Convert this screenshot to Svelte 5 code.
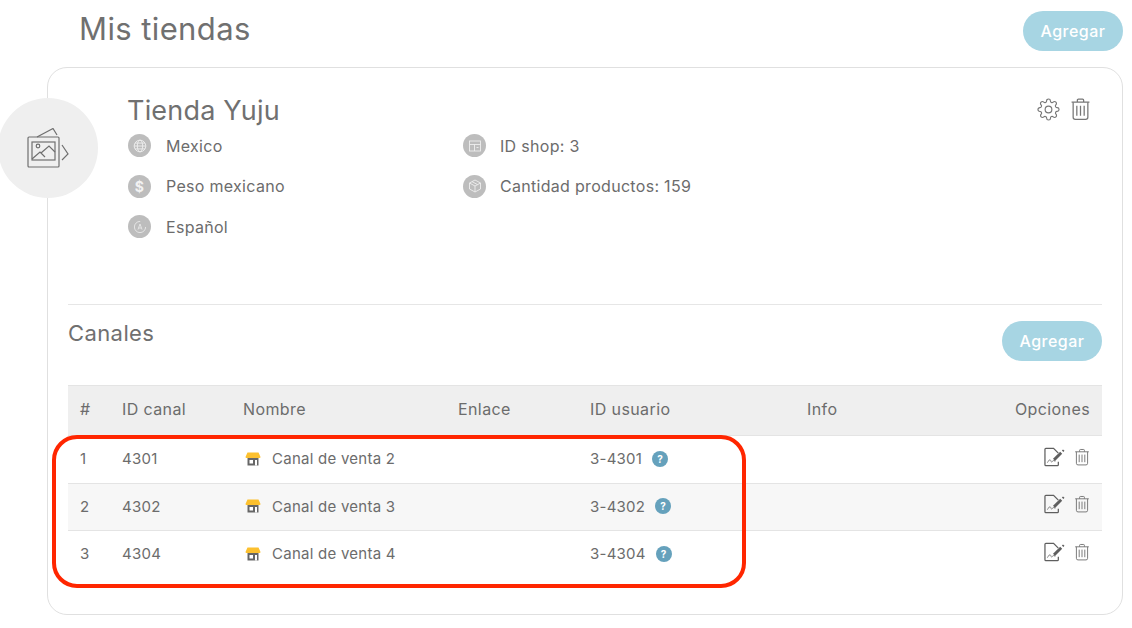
<script>
  const rows = [
    { n: 1, id: '4301', name: 'Canal de venta 2', user: '3-4301' },
    { n: 2, id: '4302', name: 'Canal de venta 3', user: '3-4302' },
    { n: 3, id: '4304', name: 'Canal de venta 4', user: '3-4304' }
  ];
</script>

{#snippet trash(cls)}
  <svg class={cls} viewBox="0 0 20 22" fill="none" stroke="#777" stroke-width="1.2">
    <path d="M1.5 4.5h17M7 4.5V2.6q0-1 1-1h4q1 0 1 1v1.9" />
    <path d="M3 4.5v14.4q0 2 2 2h10q2 0 2-2V4.5" />
    <path d="M6.5 8v9.5M10 8v9.5M13.5 8v9.5" />
  </svg>
{/snippet}

<div class="page">
  <header class="top">
    <h1>Mis tiendas</h1>
    <button class="add">Agregar</button>
  </header>

  <section class="card">
    <div class="avatar">
      <svg viewBox="0 0 44 40" width="44" height="40" fill="none" stroke="#6f6f6f" stroke-width="1.2">
        <rect x="1" y="9" width="31" height="30" rx="1" />
        <rect x="5" y="14" width="23" height="18" />
        <circle cx="11" cy="18" r="1.800" />
        <path d="M5 31l8-7 5 5M14 25l8-7 6 6" />
        <path d="M10 9l16-8.500 4 6.500M35 17l6 9-6 6" />
      </svg>
    </div>

    <div class="shop">
      <div class="actions">
        <svg class="gear" viewBox="0 0 24 24" fill="none" stroke="#777" stroke-width="1.200">
          <circle cx="12" cy="12" r="3.500" />
          <path d="M19.4 15a1.65 1.65 0 0 0 .33 1.82l.06.06a2 2 0 0 1 0 2.83 2 2 0 0 1-2.83 0l-.06-.06a1.65 1.65 0 0 0-1.82-.33 1.65 1.65 0 0 0-1 1.51V21a2 2 0 0 1-2 2 2 2 0 0 1-2-2v-.09A1.65 1.65 0 0 0 9 19.4a1.65 1.65 0 0 0-1.82.33l-.06.06a2 2 0 0 1-2.83 0 2 2 0 0 1 0-2.83l.06-.06a1.65 1.65 0 0 0 .33-1.82 1.65 1.65 0 0 0-1.51-1H3a2 2 0 0 1-2-2 2 2 0 0 1 2-2h.09A1.65 1.65 0 0 0 4.6 9a1.65 1.65 0 0 0-.33-1.82l-.06-.06a2 2 0 0 1 0-2.83 2 2 0 0 1 2.83 0l.06.06a1.65 1.65 0 0 0 1.82.33H9a1.65 1.65 0 0 0 1-1.51V3a2 2 0 0 1 2-2 2 2 0 0 1 2 2v.09a1.65 1.65 0 0 0 1 1.51 1.65 1.65 0 0 0 1.82-.33l.06-.06a2 2 0 0 1 2.83 0 2 2 0 0 1 0 2.83l-.06.06a1.65 1.65 0 0 0-.33 1.82V9a1.65 1.65 0 0 0 1.51 1H21a2 2 0 0 1 2 2 2 2 0 0 1-2 2h-.09a1.65 1.65 0 0 0-1.51 1z" />
        </svg>
        {@render trash('bin')}
      </div>
      <h2>Tienda Yuju</h2>
      <div class="facts">
        <ul class="col-a">
          <li>
            <span class="dot"><svg viewBox="0 0 12 12" fill="none" stroke="#eee" stroke-width=".8"><circle cx="6" cy="6" r="5" /><ellipse cx="6" cy="6" rx="2.3" ry="5" /><path d="M1 6h10M1.700 3.500h8.600M1.700 8.500h8.600" /></svg></span>
            Mexico
          </li>
          <li><span class="dot dollar">$</span> Peso mexicano</li>
          <li>
            <span class="dot"><svg viewBox="0 0 14 14" fill="none" stroke="#eee" stroke-width=".8"><circle cx="7" cy="7" r="5.600" stroke-dasharray="26 9" /><path d="M5 9.500L7 4l2 5.500M5.700 8h2.600" /></svg></span>
            Español
          </li>
        </ul>
        <ul class="col-b">
          <li>
            <span class="dot"><svg viewBox="0 0 14 14" fill="none" stroke="#eee" stroke-width=".9"><rect x="1.500" y="2" width="11" height="10" /><path d="M1.500 5.500h11M6.500 5.500V12M8.500 8.500h2" /></svg></span>
            ID shop: 3
          </li>
          <li>
            <span class="dot"><svg viewBox="0 0 14 14" fill="none" stroke="#eee" stroke-width=".9"><path d="M7 1l5.500 3v6L7 13l-5.500-3V4zM1.500 4L7 7l5.500-3M7 7v6M4 2.600l5.500 3" /></svg></span>
            Cantidad productos: 159
          </li>
        </ul>
      </div>
    </div>

    <div class="channels">
      <div class="channels-head">
        <h3>Canales</h3>
        <button class="add">Agregar</button>
      </div>

      <div class="table">
        <div class="row head">
          <span>#</span><span>ID canal</span><span>Nombre</span><span>Enlace</span><span>ID usuario</span><span>Info</span><span class="right">Opciones</span>
        </div>
        {#each rows as r}
          <div class="row">
            <span>{r.n}</span>
            <span>{r.id}</span>
            <span class="name">
              <svg class="store" viewBox="0 0 16 14">
                <path d="M2.500 6h11v7.500h-11z" fill="#666" />
                <path d="M4.500 8h3.500v3.500H4.500z M10 8h2v5.500h-2z" fill="#fff" />
                <path d="M2.500 0.500h11l2 4.500q0 1-1 1H1.500q-1 0-1-1z" fill="#fcc02e" />
              </svg>
              {r.name}
            </span>
            <span></span>
            <span class="user">{r.user}<i class="help">?</i></span>
            <span></span>
            <span class="opts">
              <svg class="sign" viewBox="0 0 22 20" fill="none" stroke="#5f5f5f" stroke-width="1.300">
                <path d="M15 15v3q0 1-1 1H2q-1 0-1-1V2q0-1 1-1h8l5 5" />
                <path d="M3.500 16q2-4 3-3t1 2 2-1 2 1" stroke="#888" stroke-width="1" />
                <path d="M10.500 13l7.500-7.500" stroke-width="3" />
                <path d="M19.500 4l1.200-1.200" stroke-width="2.200" />
              </svg>
              {@render trash('bin small')}
            </span>
          </div>
        {/each}
      </div>
    </div>

    <div class="mark"></div>
  </section>
</div>

<style>
  :global(body) {
    margin: 0;
    background: #fff;
    overflow: hidden;
  }
  :global(#app) { padding-top: .1px; }
  .page {
    width: 1076px;
    margin-left: 47px;
    font-family: Inter, "Liberation Sans", sans-serif;
    color: #6c6c6c;
    font-size: 16px;
    letter-spacing: .3px;
  }
  h1, h2, h3, ul { margin: 0; padding: 0; font-weight: 400; }
  ul { list-style: none; }
  .top {
    display: flex;
    justify-content: space-between;
    align-items: flex-start;
    height: 40px;
    margin-top: 11px;
    margin-bottom: 16px;
    padding-left: 32px;
  }
  h1 { font-size: 31px; line-height: 36px; letter-spacing: .4px; color: #707070; }
  .add {
    width: 100px;
    height: 40px;
    border: 0;
    border-radius: 20px;
    background: #a7d5e3;
    color: #fff;
    font: 500 16px Inter, sans-serif;
    letter-spacing: .5px;
    padding: 0;
  }
  .card {
    position: relative;
    box-sizing: border-box;
    height: 548px;
    border: 1px solid #e0e0e0;
    border-radius: 20px;
    padding: 0 20px;
  }
  .avatar {
    position: absolute;
    left: -50px;
    top: 30px;
    width: 100px;
    height: 100px;
    padding-left: 2px;
    box-sizing: border-box;
    border-radius: 50%;
    background: #efefef;
    display: flex;
    align-items: center;
    justify-content: center;
  }
  .shop {
    position: relative;
    box-sizing: border-box;
    height: 237px;
    padding: 29px 0 0 60px;
    border-bottom: 1px solid #e6e6e6;
  }
  .actions {
    position: absolute;
    right: 11px;
    top: 29px;
    display: flex;
    gap: 10px;
    align-items: center;
  }
  .gear { width: 23px; height: 23px; margin-left: -1px; }
  .bin { width: 21px; height: 24px; }
  .bin.small { width: 16px; height: 20px; }
  h2 {
    font-size: 27px;
    line-height: 28.300px;
    letter-spacing: .2px;
    color: #707070;
    margin-left: -1px;
  }
  .facts { display: flex; }
  .col-a { width: 335px; }
  .col-b li { gap: 14px; }
  li {
    display: flex;
    align-items: center;
    gap: 15px;
    height: 40.500px;
  }
  .dot {
    width: 23px;
    height: 23px;
    border-radius: 50%;
    background: #bdbdbd;
    display: flex;
    align-items: center;
    justify-content: center;
    color: #f2f2f2;
    font-weight: 700;
    font-size: 14px;
    flex: none;
  }
  .dot svg { width: 14px; height: 14px; }
  .channels { padding-top: 15px; }
  .channels-head {
    display: flex;
    justify-content: space-between;
    align-items: flex-start;
    height: 65px;
  }
  .channels-head .add { margin-top: 1px; }
  h3 { font-size: 22px; line-height: 27px; letter-spacing: .4px; color: #707070; }
  .table { border-top: 1px solid #e4e4e4; }
  .row {
    display: grid;
    grid-template-columns: 42px 121px 215px 132px 217px 1fr 130px;
    align-items: center;
    height: 47.500px;
    padding-bottom: 1px;
    border-bottom: 1px solid #e4e4e4;
    box-sizing: border-box;
    font-size: 15px;
    letter-spacing: .25px;
  }
  .row > span { padding-left: 12px; }
  .row.head {
    height: 50px;
    padding-bottom: 3px;
    background: #efefef;
    font-size: 16px;
    letter-spacing: .4px;
  }
  .row:nth-child(3) { background: #f7f7f7; }
  .row:last-child { border-bottom: 0; padding-bottom: 2px; }
  .row > .right { text-align: right; padding: 0 12px 0 0; }
  .name { display: flex; align-items: center; gap: 11px; }
  .store { width: 16px; height: 14px; margin-left: 2px; }
  .user { display: flex; align-items: center; gap: 10px; }
  .help {
    width: 16px;
    height: 16px;
    border-radius: 50%;
    background: #65a1bc;
    color: #fff;
    font: 700 10px/16px Inter, sans-serif;
    text-align: center;
    display: block;
  }
  .row > .opts {
    display: flex;
    justify-content: flex-end;
    align-items: center;
    gap: 9px;
    padding: 0 12px 4px 0;
  }
  .sign { width: 21px; height: 20px; }
  .mark {
    position: absolute;
    left: 4px;
    top: 367px;
    width: 694px;
    height: 153px;
    box-sizing: border-box;
    border: 4px solid #ff2600;
    border-radius: 25px;
    pointer-events: none;
  }
</style>
